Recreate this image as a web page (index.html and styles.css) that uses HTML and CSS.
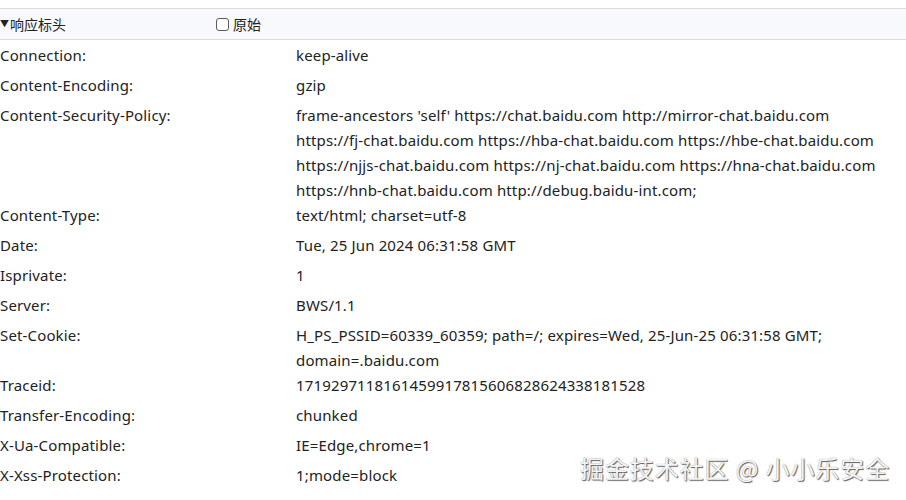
FILE: index.html
```html
<!DOCTYPE html>
<html lang="zh">
<head>
<meta charset="utf-8">
<link rel="stylesheet" href="styles.css">
</head>
<body>
<div class="panel">
  <div class="section-head">
    <div class="title"><span class="tri">▼</span>响应标头</div>
    <label class="raw"><span class="box"></span>原始</label>
  </div>
  <div class="rows">
    <div class="row"><div class="key">Connection:</div><div class="val">keep-alive</div></div>
    <div class="row"><div class="key">Content-Encoding:</div><div class="val">gzip</div></div>
    <div class="row"><div class="key">Content-Security-Policy:</div><div class="val">frame-ancestors 'self' https://chat.baidu.com http://mirror-chat.baidu.com<br>https://fj-chat.baidu.com https://hba-chat.baidu.com https://hbe-chat.baidu.com<br>https://njjs-chat.baidu.com https://nj-chat.baidu.com https://hna-chat.baidu.com<br>https://hnb-chat.baidu.com http://debug.baidu-int.com;</div></div>
    <div class="row"><div class="key">Content-Type:</div><div class="val">text/html; charset=utf-8</div></div>
    <div class="row"><div class="key">Date:</div><div class="val">Tue, 25 Jun 2024 06:31:58 GMT</div></div>
    <div class="row"><div class="key">Isprivate:</div><div class="val">1</div></div>
    <div class="row"><div class="key">Server:</div><div class="val">BWS/1.1</div></div>
    <div class="row"><div class="key">Set-Cookie:</div><div class="val">H_PS_PSSID=60339_60359; path=/; expires=Wed, 25-Jun-25 06:31:58 GMT;<br>domain=.baidu.com</div></div>
    <div class="row"><div class="key">Traceid:</div><div class="val">1719297118161459917815606828624338181528</div></div>
    <div class="row"><div class="key">Transfer-Encoding:</div><div class="val">chunked</div></div>
    <div class="row"><div class="key">X-Ua-Compatible:</div><div class="val">IE=Edge,chrome=1</div></div>
    <div class="row"><div class="key">X-Xss-Protection:</div><div class="val">1;mode=block</div></div>
  </div>
  <div class="watermark">掘金技术社区 @ 小小乐安全</div>
</div>
</body>
</html>
```

FILE: styles.css
```css
html, body {
  margin: 0;
  padding: 0;
  background: #ffffff;
}
body {
  font-family: "Noto Sans", "Noto Sans CJK SC", sans-serif;
  font-size: 15px;
  color: #222222;
  overflow: hidden;
}
.panel {
  position: relative;
  height: 500px;
  padding-top: 8px;
  box-sizing: border-box;
}
.section-head {
  display: flex;
  align-items: center;
  height: 32px;
  box-sizing: border-box;
  background: #f8f9fd;
  border-top: 1px solid #d9dbe9;
  border-bottom: 1px solid #d9dbe9;
  line-height: 20px;
}
.title {
  display: flex;
  align-items: center;
  width: 216px;
  font-family: "Noto Sans CJK SC", sans-serif;
  font-size: 14px;
}
.tri {
  font-size: 9px;
  width: 10px;
  line-height: 20px;
}
.raw {
  display: flex;
  align-items: center;
  font-family: "Noto Sans CJK SC", sans-serif;
  font-size: 14px;
}
.box {
  width: 11px;
  height: 11px;
  border: 1px solid #5b5b5b;
  border-radius: 3px;
  background: #fff;
  margin-right: 4px;
}
.rows {
  display: flex;
  flex-direction: column;
}
.row {
  display: grid;
  grid-template-columns: 296px 1fr;
  align-items: start;
  min-height: 30px;
  box-sizing: border-box;
  padding-top: 3px;
  line-height: 25px;
  letter-spacing: 0.15px;
}
.key, .val {
  white-space: nowrap;
}
.val {
  margin-bottom: -3px;
}
.watermark {
  position: absolute;
  left: 580px;
  top: 450px;
  font-family: "Noto Sans CJK SC", sans-serif;
  font-size: 24px;
  letter-spacing: 0.9px;
  color: #f4f4f4;
  text-shadow: 1px 1px 1px #5e5e5e, 0 0 1px #8a8a8a;
}
```
